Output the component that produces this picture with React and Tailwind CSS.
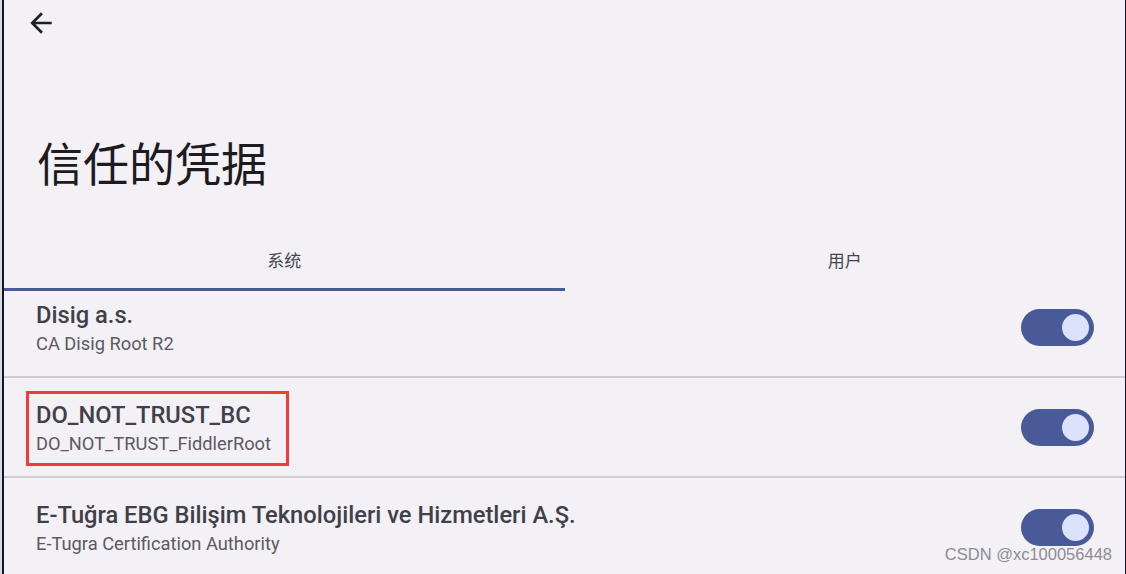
import { useState } from "react";

const CERTS = [
  { title: "Disig a.s.", sub: "CA Disig Root R2" },
  { title: "DO_NOT_TRUST_BC", sub: "DO_NOT_TRUST_FiddlerRoot", marked: true },
  { title: "E-Tuğra EBG Bilişim Teknolojileri ve Hizmetleri A.Ş.", sub: "E-Tugra Certification Authority" },
];

function Toggle({ on }) {
  return (
    <div className={`w-[73px] h-[37px] rounded-full flex items-center px-[5px] ${on ? "bg-[#485a97] justify-end" : "bg-[#d9d7de] justify-start"}`}>
      <div className="w-[27px] h-[27px] rounded-full bg-[#dde2fc]" />
    </div>
  );
}

function CertRow({ title, sub, marked, first }) {
  return (
    <div className={first ? "-mt-[13px]" : ""}>
      <div className="h-[98px] flex items-center pl-[32px] pr-[31px]">
        <div className="flex-1 pt-[3px]">
          <div className="relative inline-block">
            <p className="text-[23.7px] leading-[28px] font-medium text-[#404048]">{title}</p>
            <p className="text-[18.3px] leading-[24px] mt-[3px] text-[#5b5a61]">{sub}</p>
            {marked && (
              <span className="absolute left-[-10px] top-[-10px] w-[263px] h-[75px] border-[3px] border-[#f53a3a]" />
            )}
          </div>
        </div>
        <Toggle on />
      </div>
      <div className="h-[2px] bg-[#cfcdd3]" />
    </div>
  );
}

export default function App() {
  const [tab, setTab] = useState(0);

  return (
    <div className="w-[1126px] h-[574px] flex bg-[#f3f1f6] overflow-hidden" style={{ fontFamily: "Roboto, 'Noto Sans CJK SC', sans-serif" }}>
      <div className="w-[2px] bg-[#d8dbd6]" />
      <div className="w-[2px] bg-[#14142e]" />

      <div className="flex-1 flex flex-col relative min-w-0">
        {/* top bar */}
        <div className="h-[46px] flex items-center pl-[21px]">
          <svg width="32" height="32" viewBox="0 0 24 24" className="text-[#1f1f24]" fill="currentColor">
            <path d="M20 11H7.83l5.59-5.59L12 4l-8 8 8 8 1.41-1.41L7.83 13H20v-2z" />
          </svg>
        </div>

        {/* heading */}
        <h1 className="mt-[83px] pl-[33px] text-[46px] leading-[64px] text-[#1d1b20]" style={{ fontFamily: "'Noto Sans CJK SC', sans-serif" }}>
          信任的凭据
        </h1>

        {/* tabs */}
        <div className="mt-[39px] flex h-[59px]">
          {["系统", "用户"].map((t, i) => (
            <button key={t} onClick={() => setTab(i)} className="flex-1 flex flex-col">
              <span className="flex-1 flex items-center justify-center text-[17px] text-[#46454b]" style={{ fontFamily: "'Noto Sans CJK SC', sans-serif" }}>
                {t}
              </span>
              <span className={`h-[3px] ${tab === i ? "bg-[#485a97]" : "bg-transparent"}`} />
            </button>
          ))}
        </div>

        {/* list */}
        <div className="flex-1 overflow-hidden">
          {CERTS.map((c, i) => (
            <CertRow key={c.title} {...c} first={i === 0} />
          ))}
        </div>

        <span className="absolute right-[13px] bottom-[7px] text-[16.5px] text-[#8d8c92]" style={{ fontFamily: "'Liberation Sans', sans-serif" }}>
          CSDN @xc100056448
        </span>
      </div>

      <div className="w-[1px] bg-[#14142e]" />
    </div>
  );
}
